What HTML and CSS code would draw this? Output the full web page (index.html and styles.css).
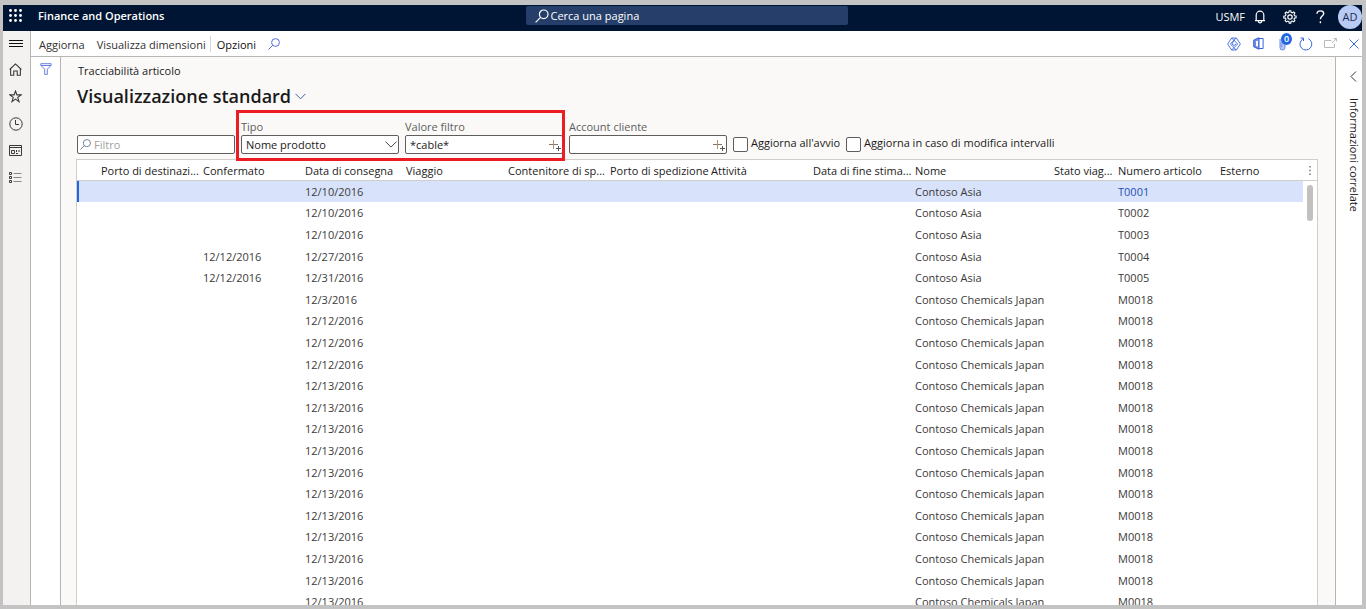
FILE: index.html
```html
<!DOCTYPE html>
<html lang="it">
<head>
<meta charset="utf-8">
<title>Finance and Operations</title>
<link rel="stylesheet" href="styles.css">
</head>
<body>
<div class="app">
  <header class="topbar">
    <div class="topbar-start">
      <button class="icon-btn waffle" aria-label="Avvio app">
        <svg width="13" height="13" viewBox="0 0 13 13" fill="#fff"><circle cx="1.5" cy="1.5" r="1.4"/><circle cx="6.5" cy="1.5" r="1.4"/><circle cx="11.5" cy="1.5" r="1.4"/><circle cx="1.5" cy="6.5" r="1.4"/><circle cx="6.5" cy="6.5" r="1.4"/><circle cx="11.5" cy="6.5" r="1.4"/><circle cx="1.5" cy="11.5" r="1.4"/><circle cx="6.5" cy="11.5" r="1.4"/><circle cx="11.5" cy="11.5" r="1.4"/></svg>
      </button>
      <span class="brand">Finance and Operations</span>
    </div>
    <label class="page-search">
      <svg width="14" height="14" viewBox="0 0 14 14" fill="none" stroke="#fff" stroke-width="1.2"><circle cx="8.7" cy="5.3" r="4.3"/><path d="M5.6 8.4 0.6 13.4"/></svg>
      <input type="text" placeholder="Cerca una pagina" aria-label="Cerca una pagina">
    </label>
    <div class="topbar-end">
      <span class="company">USMF</span>
      <button class="icon-btn top-btn" aria-label="Notifiche">
        <svg width="12" height="14" viewBox="0 0 12 14" fill="none" stroke="#fff" stroke-width="1.2"><path d="M1 10.6h10M2.2 10.6V5a3.8 3.8 0 0 1 7.600 0v5.600M4.400 11.200a1.600 1.600 0 0 0 3.200 0"/></svg>
      </button>
      <button class="icon-btn top-btn" aria-label="Impostazioni">
        <svg width="14" height="14" viewBox="0 0 14 14" fill="none" stroke="#fff"><circle cx="7" cy="7" r="2.200" stroke-width="1.200"/><path stroke-width="1.100" d="M5.900 2.300 6.200.7h1.600l.3 1.600 1.200.5 1.400-.9 1.200 1.200-.9 1.400.5 1.200 1.600.3v1.800l-1.600.3-.5 1.200.9 1.400-1.200 1.200-1.400-.9-1.200.5-.3 1.600H6.200l-.3-1.600-1.200-.5-1.400.9-1.200-1.200.9-1.400-.5-1.200L.8 7.900V6.100l1.700-.3.5-1.200-.9-1.400 1.200-1.200 1.400.9z"/></svg>
      </button>
      <button class="icon-btn top-btn" aria-label="Guida">
        <svg width="9" height="14" viewBox="0 0 9 14" fill="none" stroke="#fff" stroke-width="1.400"><path d="M1 3.800C1 1.900 2.500.9 4.400.9s3.300 1 3.300 2.700c0 2.400-3.300 2.700-3.300 5.700"/><path d="M4.400 11.300v1.900"/></svg>
      </button>
      <button class="avatar" aria-label="Account AD">AD</button>
    </div>
  </header>

  <div class="shell">
    <nav class="rail" aria-label="Navigazione">
      <button class="icon-btn menu" aria-label="Espandi riquadro">
        <svg width="14" height="9" viewBox="0 0 14 9" stroke="#111" stroke-width="1"><path d="M0 1.500h14M0 4.500h14M0 7.500h14"/></svg>
      </button>
      <button class="icon-btn" aria-label="Home">
        <svg width="13" height="13" viewBox="0 0 12 12" fill="none" stroke="#3b3a39"><path d="M.6 6 6 .9 11.400 6M1.500 5.300v6h2.900V7.400h3.200v3.900h2.900v-6"/></svg>
      </button>
      <button class="icon-btn" aria-label="Preferiti">
        <svg width="13" height="13" viewBox="0 0 13 13" fill="none" stroke="#3b3a39" stroke-width="1.100"><path d="m6.500 1 1.400 3.900h4.200L8.700 7.400l1.300 4.200-3.500-2.500L3 11.600l1.300-4.200L.9 4.900h4.200z"/></svg>
      </button>
      <button class="icon-btn" aria-label="Recenti">
        <svg width="14" height="14" viewBox="0 0 14 14" fill="none" stroke="#3b3a39"><circle cx="7" cy="7" r="6.200"/><path d="M6.500 3v4.500H10"/></svg>
      </button>
      <button class="icon-btn" aria-label="Aree di lavoro">
        <svg width="13" height="11" viewBox="0 0 13 11" fill="none" stroke="#3b3a39"><path d="M.5.5h12v10H.5zM.5 2.500h12M2.500 5.500h3v3h-3zM7.500 5v2M10 5v2M7 8.500h2"/></svg>
      </button>
      <button class="icon-btn" aria-label="Moduli">
        <svg width="13" height="12" viewBox="0 0 13 12" fill="none" stroke="#3b3a39"><path d="M.5.500h2v2h-2zM.5 4.500h2v2h-2zM.5 8.500h2v2h-2z"/><path stroke="#8a8886" d="M4.500 1.500h8M4.500 5.500h8M4.500 9.500h8"/></svg>
      </button>
    </nav>

    <div class="workspace">
      <div class="commands">
        <button class="cmd">Aggiorna</button>
        <button class="cmd">Visualizza dimensioni</button>
        <span class="divider"></span>
        <button class="cmd strong">Opzioni</button>
        <button class="icon-btn cmd-search" aria-label="Cerca">
          <svg width="12" height="12" viewBox="0 0 12 12" fill="none" stroke="#4f6bd9"><circle cx="7.500" cy="4.500" r="3.900"/><path d="M4.700 7.300.5 11.500"/></svg>
        </button>
        <div class="command-icons">
          <button class="icon-btn" aria-label="Power Apps">
            <svg width="14" height="14" viewBox="0 0 14 14" fill="none" stroke="#3a63dc" stroke-width=".9"><path d="M4.700 1h4.600L13.400 7l-4.100 6H4.700L.6 7zM4.700 1l6 6L7 10.700 3.300 7l6-6M4.700 13 7 10.700 9.300 13M7 3.300 4.900 7 7 8.500 9.100 7"/></svg>
          </button>
          <button class="icon-btn" aria-label="Apri in Office">
            <svg width="11" height="13" viewBox="0 0 11 13" fill="none" stroke="#3a63dc"><path d="M5.500 1.500h4.600v10H5.500"/><path fill="#6d8ae6" d="M6 .700v11.600L.7 9.800V3z"/><path fill="#fff" stroke="none" d="M3 4.200 5 3.400v6.200l-2-.5z"/></svg>
          </button>
          <button class="icon-btn attach" aria-label="Allegati">
            <svg width="7" height="14" viewBox="0 0 7 14" fill="#b9c8f4" stroke="#6d8ae6"><path d="M1 2v8.500a2.500 2.500 0 0 0 5 0V2a1.600 1.600 0 0 0-3.200 0v8.200"/></svg>
            <span class="badge">0</span>
          </button>
          <button class="icon-btn" aria-label="Aggiorna pagina">
            <svg width="14" height="14" viewBox="0 0 14 14" fill="none" stroke="#3a63dc"><path d="M9.300 1.700a5.900 5.900 0 1 1-5.400.3M1.500 1h3v3"/></svg>
          </button>
          <button class="icon-btn" aria-label="Apri in nuova finestra">
            <svg width="13" height="11" viewBox="0 0 13 11" fill="none" stroke="#bcbab8"><path d="M7.500 2.500h-7v7h10V6M8 5l4-4M9.500.500h3v3"/></svg>
          </button>
          <button class="icon-btn" aria-label="Chiudi">
            <svg width="10" height="10" viewBox="0 0 10 10" stroke="#3a63dc"><path d="m.5.500 9 9M9.500.500l-9 9"/></svg>
          </button>
        </div>
      </div>

      <div class="body">
        <aside class="filter-rail">
          <button class="icon-btn" aria-label="Mostra filtri">
            <svg width="12" height="12" viewBox="0 0 12 12" fill="none" stroke="#6a80e0"><path d="M.8.700h10.400v1.600L7.300 6.200v5.200H4.700V6.200L.8 2.300zM1 2.500h10"/></svg>
          </button>
        </aside>

        <main class="content">
          <p class="crumb">Tracciabilità articolo</p>
          <h1 class="title">Visualizzazione standard
            <svg width="11" height="7" viewBox="0 0 11 7" fill="none" stroke="#3a63a8"><path d="m.5.800 5 5 5-5"/></svg>
          </h1>

          <div class="filters">
            <div class="field box with-search">
              <svg width="11" height="11" viewBox="0 0 12 12" fill="none" stroke="#6b7a90"><circle cx="7.500" cy="4.500" r="3.900"/><path d="M4.700 7.300.5 11.500"/></svg>
              <input type="text" placeholder="Filtro" aria-label="Filtro">
            </div>
            <div class="highlight">
              <div class="field">
                <label for="tipo">Tipo</label>
                <div class="box">
                  <select id="tipo"><option>Nome prodotto</option></select>
                  <svg width="12" height="7" viewBox="0 0 12 7" fill="none" stroke="#444"><path d="m.5.600 5.500 5.500L11.500.6"/></svg>
                </div>
              </div>
              <div class="field">
                <label for="valore">Valore filtro</label>
                <div class="box">
                  <input id="valore" type="text" value="*cable*">
                  <svg width="12" height="12" viewBox="0 0 12 12" fill="none"><path stroke="#777" d="M0 5.500h9"/><path stroke="#b98f54" d="M4.500 1v9"/><path stroke="#555" d="M7 9.500h5M9.500 7v5"/></svg>
                </div>
              </div>
            </div>
            <div class="field">
              <label for="account">Account cliente</label>
              <div class="box">
                <input id="account" type="text">
                <svg width="12" height="12" viewBox="0 0 12 12" fill="none"><path stroke="#777" d="M0 5.500h9"/><path stroke="#b98f54" d="M4.500 1v9"/><path stroke="#555" d="M7 9.500h5M9.500 7v5"/></svg>
              </div>
            </div>
            <label class="check"><input type="checkbox"><span>Aggiorna all'avvio</span></label>
            <label class="check"><input type="checkbox"><span>Aggiorna in caso di modifica intervalli</span></label>
          </div>

          <div class="grid">
            <table class="rows">
              <colgroup><col class="c-mark"><col class="c-std"><col class="c-std"><col class="c-slim"><col class="c-std"><col class="c-std"><col class="c-slim"><col class="c-std"><col class="c-std"><col class="c-name"><col class="c-state"><col class="c-std"><col></colgroup>
              <thead>
                <tr><th></th><th title="Porto di destinazione">Porto di destinazi...</th><th>Confermato</th><th>Data di consegna</th><th>Viaggio</th><th title="Contenitore di spedizione">Contenitore di sp...</th><th>Porto di spedizione</th><th>Attività</th><th title="Data di fine stimata">Data di fine stima...</th><th>Nome</th><th title="Stato viaggio">Stato viag...</th><th>Numero articolo</th><th>Esterno</th></tr>
              </thead>
              <tbody>
                <tr class="selected"><td></td><td></td><td></td><td>12/10/2016</td><td></td><td></td><td></td><td></td><td></td><td>Contoso Asia</td><td></td><td><a href="#">T0001</a></td><td></td></tr>
                <tr><td></td><td></td><td></td><td>12/10/2016</td><td></td><td></td><td></td><td></td><td></td><td>Contoso Asia</td><td></td><td>T0002</td><td></td></tr>
                <tr><td></td><td></td><td></td><td>12/10/2016</td><td></td><td></td><td></td><td></td><td></td><td>Contoso Asia</td><td></td><td>T0003</td><td></td></tr>
                <tr><td></td><td></td><td>12/12/2016</td><td>12/27/2016</td><td></td><td></td><td></td><td></td><td></td><td>Contoso Asia</td><td></td><td>T0004</td><td></td></tr>
                <tr><td></td><td></td><td>12/12/2016</td><td>12/31/2016</td><td></td><td></td><td></td><td></td><td></td><td>Contoso Asia</td><td></td><td>T0005</td><td></td></tr>
                <tr><td></td><td></td><td></td><td>12/3/2016</td><td></td><td></td><td></td><td></td><td></td><td>Contoso Chemicals Japan</td><td></td><td>M0018</td><td></td></tr>
                <tr><td></td><td></td><td></td><td>12/12/2016</td><td></td><td></td><td></td><td></td><td></td><td>Contoso Chemicals Japan</td><td></td><td>M0018</td><td></td></tr>
                <tr><td></td><td></td><td></td><td>12/12/2016</td><td></td><td></td><td></td><td></td><td></td><td>Contoso Chemicals Japan</td><td></td><td>M0018</td><td></td></tr>
                <tr><td></td><td></td><td></td><td>12/12/2016</td><td></td><td></td><td></td><td></td><td></td><td>Contoso Chemicals Japan</td><td></td><td>M0018</td><td></td></tr>
                <tr><td></td><td></td><td></td><td>12/13/2016</td><td></td><td></td><td></td><td></td><td></td><td>Contoso Chemicals Japan</td><td></td><td>M0018</td><td></td></tr>
                <tr><td></td><td></td><td></td><td>12/13/2016</td><td></td><td></td><td></td><td></td><td></td><td>Contoso Chemicals Japan</td><td></td><td>M0018</td><td></td></tr>
                <tr><td></td><td></td><td></td><td>12/13/2016</td><td></td><td></td><td></td><td></td><td></td><td>Contoso Chemicals Japan</td><td></td><td>M0018</td><td></td></tr>
                <tr><td></td><td></td><td></td><td>12/13/2016</td><td></td><td></td><td></td><td></td><td></td><td>Contoso Chemicals Japan</td><td></td><td>M0018</td><td></td></tr>
                <tr><td></td><td></td><td></td><td>12/13/2016</td><td></td><td></td><td></td><td></td><td></td><td>Contoso Chemicals Japan</td><td></td><td>M0018</td><td></td></tr>
                <tr><td></td><td></td><td></td><td>12/13/2016</td><td></td><td></td><td></td><td></td><td></td><td>Contoso Chemicals Japan</td><td></td><td>M0018</td><td></td></tr>
                <tr><td></td><td></td><td></td><td>12/13/2016</td><td></td><td></td><td></td><td></td><td></td><td>Contoso Chemicals Japan</td><td></td><td>M0018</td><td></td></tr>
                <tr><td></td><td></td><td></td><td>12/13/2016</td><td></td><td></td><td></td><td></td><td></td><td>Contoso Chemicals Japan</td><td></td><td>M0018</td><td></td></tr>
                <tr><td></td><td></td><td></td><td>12/13/2016</td><td></td><td></td><td></td><td></td><td></td><td>Contoso Chemicals Japan</td><td></td><td>M0018</td><td></td></tr>
                <tr><td></td><td></td><td></td><td>12/13/2016</td><td></td><td></td><td></td><td></td><td></td><td>Contoso Chemicals Japan</td><td></td><td>M0018</td><td></td></tr>
                <tr><td></td><td></td><td></td><td>12/13/2016</td><td></td><td></td><td></td><td></td><td></td><td>Contoso Chemicals Japan</td><td></td><td>M0018</td><td></td></tr>
              </tbody>
            </table>
            <div class="grid-side">
              <button class="icon-btn more" aria-label="Opzioni griglia">
                <svg width="2" height="9" viewBox="0 0 2 9" fill="#333"><path d="M.5 0h1v1.500h-1zM.5 3.700h1v1.500h-1zM.5 7.400h1v1.500h-1z"/></svg>
              </button>
              <div class="thumb"></div>
            </div>
          </div>
        </main>

        <aside class="related">
          <button class="icon-btn" aria-label="Espandi">
            <svg width="7" height="11" viewBox="0 0 7 11" fill="none" stroke="#333"><path d="m6 .500-5 5 5 5"/></svg>
          </button>
          <span class="related-title">Informazioni correlate</span>
        </aside>
      </div>
    </div>
  </div>
</div>
</body>
</html>
```
FILE: styles.css
```css
* { box-sizing: border-box; }

body {
  margin: 0;
  font-family: "Open Sans", "Noto Sans", sans-serif;
  font-size: 11px;
  line-height: 16px;
  color: #1b1a19;
}

button, input, select {
  font: inherit;
  color: inherit;
  margin: 0;
  padding: 0;
  border: 0;
  background: none;
}

svg { display: block; flex: none; }

.app {
  display: flex;
  flex-direction: column;
  height: 100vh;
  overflow: hidden;
  border: solid #c3c3c3;
  border-width: 5px 4px 4px 3px;
}

.icon-btn {
  display: flex;
  align-items: center;
  justify-content: center;
}

/* Top bar */
.topbar {
  display: flex;
  flex: none;
  height: 26px;
  padding-left: 6px;
  background: #001433;
  color: #fff;
  overflow: hidden;
}

.topbar-start, .topbar-end {
  display: flex;
  flex: 1;
  align-items: center;
}

.topbar-start { padding-bottom: 5px; }
.waffle { height: 22px; }
.brand { margin-left: 16px; font-weight: 600; }

.page-search {
  display: flex;
  align-items: center;
  width: 322px;
  height: 19px;
  margin: 1px 0 0 2px;
  padding-left: 9px;
  gap: 2px;
  border-radius: 2px;
  background: #263f6a;
}

.page-search input { flex: 1; min-width: 0; height: 19px; }
.page-search input::placeholder { color: #fff; opacity: 1; }

.topbar-end { justify-content: flex-end; padding-bottom: 2px; }
.top-btn { width: 30px; height: 24px; }
.avatar {
  width: 24px;
  height: 24px;
  margin-left: 3px;
  border-radius: 50%;
  background: #b9cbf5;
  color: #1b2c4f;
  flex: none;
}

/* Shell */
.shell { display: flex; flex: 1; min-height: 0; }

.rail {
  width: 28px;
  flex: none;
  background: #f3f2f1;
  border-right: 1px solid #b8b6b4;
}

.rail .icon-btn { width: 25px; height: 27px; }
.rail .menu { height: 25px; }

.workspace {
  display: flex;
  flex-direction: column;
  flex: 1;
  min-width: 0;
}

.commands {
  display: flex;
  align-items: center;
  flex: none;
  height: 26px;
  padding-left: 8px;
  background: #fff;
  border-bottom: 1px solid #b8b6b4;
}

.cmd { margin-right: 12px; color: #323130; padding-top: 2px; }
.strong { color: #111; margin-right: 12px; }
.divider { width: 1px; height: 16px; margin: 0 6px 0 -8px; background: #d8d6d4; }
.command-icons { display: flex; gap: 8px; margin-left: auto; }
.command-icons .icon-btn { width: 16px; height: 16px; }

.attach { position: relative; }
.badge {
  position: absolute;
  top: -3px;
  right: -2px;
  width: 11px;
  height: 12px;
  border-radius: 50%;
  background: #2266e3;
  color: #fff;
  font-size: 9px;
  font-weight: 600;
  line-height: 12px;
}

.body { display: flex; flex: 1; min-height: 0; }

.filter-rail {
  width: 30px;
  flex: none;
  padding-top: 6px;
  background: #fff;
  border-right: 1px solid #b8b6b4;
}

.filter-rail .icon-btn { width: 29px; }

/* Content */
.content {
  display: flex;
  flex-direction: column;
  flex: 1;
  min-width: 0;
  padding: 6px 17px 0 15px;
  background: #faf9f8;
}

.crumb { margin: 0 0 0 2px; }

.title {
  display: flex;
  align-items: center;
  gap: 4px;
  margin: 3px 0 9px 1px;
  font-size: 18px;
  font-weight: 600;
  line-height: 28px;
}

.filters {
  display: flex;
  align-items: flex-end;
  gap: 6px;
  padding: 0 0 5px 1px;
}

.field { width: 158px; flex: none; color: #605e5c; }
.field label { display: block; }

.box {
  display: flex;
  align-items: center;
  height: 19px;
  padding: 0 1px 0 4px;
  border: 1px solid #605e5c;
  border-radius: 2px;
  background: #fff;
  color: #1b1a19;
}

.box input, .box select {
  flex: 1;
  min-width: 0;
  height: 17px;
  outline: 0;
  appearance: none;
}

.with-search { padding-left: 2px; gap: 3px; }
.box input::placeholder { color: #a19f9d; opacity: 1; }

.highlight { position: relative; display: flex; gap: 6px; }
.highlight::after {
  content: "";
  position: absolute;
  inset: -9px -2px -7px -5px;
  border: 3px solid #ed1c24;
  pointer-events: none;
}

.check { display: flex; align-items: center; gap: 3px; height: 19px; }
.check span { padding-bottom: 3px; }
.check input {
  width: 15px;
  height: 15px;
  appearance: none;
  border: 1px solid #605e5c;
  border-radius: 2px;
  background: #fff;
}

/* Data grid */
.grid {
  display: flex;
  align-items: flex-start;
  flex: 1;
  min-height: 0;
  overflow: hidden;
  border: solid #d0cecc;
  border-width: 1px 1px 0;
  background: #fff;
}

.rows {
  flex: 1;
  width: 0;
  table-layout: fixed;
  border-collapse: separate;
  border-spacing: 0;
}

.c-mark { width: 20px; }
.c-std { width: 102px; }
.c-slim { width: 101px; }
.c-name { width: 139px; }
.c-state { width: 64px; }

th, td {
  padding: 0 0 0 4px;
  text-align: left;
  white-space: nowrap;
}

th {
  height: 21px;
  padding-top: 2px;
  font-weight: 400;
  border-bottom: 1px solid #d0cecc;
}
td { height: 22px; color: #3b3a39; }
tr:nth-child(5n+1) td, tr:nth-child(5n+4) td { height: 21px; }

.selected td { background: #d8e3fb; }
.selected td:first-child { border-left: 2px solid #2266e3; }
td a { color: #1f4fb8; text-decoration: none; }

.grid-side { width: 14px; flex: none; }
.more { width: 14px; height: 21px; border-bottom: 1px solid #d0cecc; }
.thumb {
  width: 6px;
  height: 36px;
  margin: 4px 0 0 4px;
  border-radius: 3px;
  background: #c2c0be;
}

/* Related information */
.related {
  display: flex;
  flex-direction: column;
  align-items: center;
  gap: 16px;
  width: 27px;
  flex: none;
  padding: 14px 0 0 9px;
  background: #fff;
  border-left: 1px solid #b8b6b4;
}

.related-title { writing-mode: vertical-rl; }
```
